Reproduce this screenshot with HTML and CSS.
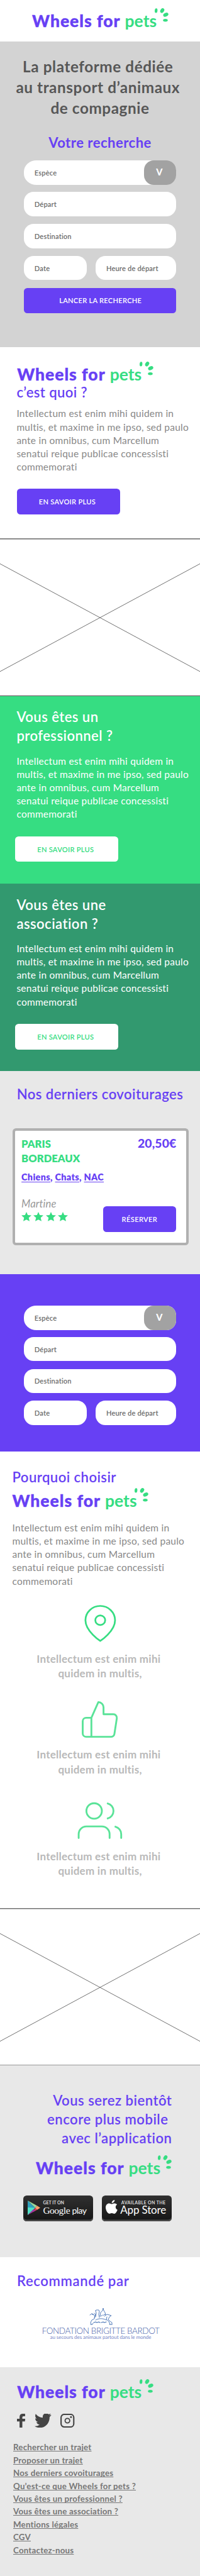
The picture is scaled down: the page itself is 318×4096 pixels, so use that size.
FILE: index.html
```html
<!DOCTYPE html>
<html lang="fr">
<head>
<meta charset="utf-8">
<title>Wheels for pets</title>
<link rel="stylesheet" href="styles.css">
</head>
<body>
<svg class="defs" width="0" height="0">
  <symbol id="paw" viewBox="0 0 24 24">
    <ellipse cx="3.2" cy="3.9" rx="2.2" ry="3.7" transform="rotate(5 3.2 3.9)"/>
    <ellipse cx="13" cy="3.8" rx="2.9" ry="4" transform="rotate(32 13 3.8)"/>
    <ellipse cx="18.6" cy="10.4" rx="4.3" ry="2.9" transform="rotate(-25 18.6 10.4)"/>
    <ellipse cx="18" cy="19.3" rx="3.7" ry="2.2"/>
  </symbol>
  <symbol id="star" viewBox="0 0 16 15">
    <path d="M8 0l2.2 4.9 5.8.6-4.3 3.8 1.3 5.4L8 12.300l-5 2.400 1.300-5.400L0 5.500l5.800-.6z"/>
  </symbol>
</svg>

<header class="header">
  <div class="logo"><span class="logo-main">Wheels for</span><span class="logo-pets">pets</span><svg class="logo-paw"><use href="#paw"/></svg></div>
</header>

<section class="hero">
  <h1>La plateforme dédiée&nbsp;<br>au transport d’animaux&nbsp;<br>de compagnie</h1>
  <h2 class="hero-sub">Votre recherche</h2>
  <div class="form">
    <div class="field select"><span>Espèce</span><b class="chevron">V</b></div>
    <div class="field">Départ</div>
    <div class="field">Destination</div>
    <div class="row"><div class="field date">Date</div><div class="field hour">Heure de départ</div></div>
    <a class="btn search">LANCER LA RECHERCHE</a>
  </div>
</section>

<section class="about">
  <div class="logo">
    <span class="logo-main">Wheels for</span><span class="logo-pets">pets</span><svg class="logo-paw"><use href="#paw"/></svg>
  </div>
  <h2 class="about-title">c’est quoi ?</h2>
  <p class="text">Intellectum est enim mihi quidem in<br>multis, et maxime in me ipso, sed paulo<br>ante in omnibus, cum Marcellum<br>senatui reique publicae concessisti<br>commemorati</p>
  <a class="btn more">EN SAVOIR PLUS</a>
</section>

<svg class="placeholder" viewBox="0 0 318 251.300" preserveAspectRatio="none">
  <rect width="318" height="1.600"/><rect y="249.700" width="318" height="1.600"/>
  <path d="M0 40.400L318 211.800M318 40.400L0 211.800"/>
</svg>

<section class="promo pro">
  <h2>Vous êtes un<br>professionnel ?</h2>
  <p class="text">Intellectum est enim mihi quidem in<br>multis, et maxime in me ipso, sed paulo<br>ante in omnibus, cum Marcellum<br>senatui reique publicae concessisti<br>commemorati</p>
  <a class="btn more light">EN SAVOIR PLUS</a>
</section>
<section class="promo asso">
  <h2>Vous êtes une<br>association ?</h2>
  <p class="text">Intellectum est enim mihi quidem in<br>multis, et maxime in me ipso, sed paulo<br>ante in omnibus, cum Marcellum<br>senatui reique publicae concessisti<br>commemorati</p>
  <a class="btn more light">EN SAVOIR PLUS</a>
</section>

<section class="rides">
  <h2>Nos derniers covoiturages</h2>
  <article class="card">
    <div class="card-top">
      <div class="cities">PARIS<br>BORDEAUX</div>
      <div class="price">20,50€</div>
    </div>
    <div class="tags"><u>Chiens</u>, <u>Chats</u>, <u>NAC</u></div>
    <div class="card-bottom">
      <div>
        <div class="driver">Martine</div>
        <div class="stars">
          <svg><use href="#star"/></svg><svg><use href="#star"/></svg><svg><use href="#star"/></svg><svg><use href="#star"/></svg>
        </div>
      </div>
      <a class="btn book">RÉSERVER</a>
    </div>
  </article>
</section>

<section class="search-band">
  <div class="form">
    <div class="field select"><span>Espèce</span><b class="chevron">V</b></div>
    <div class="field">Départ</div>
    <div class="field">Destination</div>
    <div class="row"><div class="field date">Date</div><div class="field hour">Heure de départ</div></div>
  </div>
</section>

<section class="why">
  <h2>Pourquoi choisir</h2>
  <div class="logo"><span class="logo-main">Wheels for</span><span class="logo-pets">pets</span><svg class="logo-paw"><use href="#paw"/></svg></div>
  <p class="text">Intellectum est enim mihi quidem in<br>multis, et maxime in me ipso, sed paulo<br>ante in omnibus, cum Marcellum<br>senatui reique publicae concessisti<br>commemorati</p>
  <svg class="icon pin" viewBox="0 0 24 24" preserveAspectRatio="none"><path d="M21 10c0 7-9 13-9 13s-9-6-9-13a9 9 0 0 1 18 0z"/><circle cx="12" cy="10" r="3"/></svg>
  <p class="reason">Intellectum est enim mihi&nbsp;<br>quidem in multis,</p>
  <svg class="icon thumb" viewBox="0 0 24 24"><path d="M14 9V5a3 3 0 0 0-3-3l-4 9v11h11.280a2 2 0 0 0 2-1.700l1.380-9a2 2 0 0 0-2-2.300zM7 22H4a2 2 0 0 1-2-2v-7a2 2 0 0 1 2-2h3"/></svg>
  <p class="reason">Intellectum est enim mihi&nbsp;<br>quidem in multis,</p>
  <svg class="icon users" viewBox="0 0 24 24"><path d="M17 21v-2a4 4 0 0 0-4-4H5a4 4 0 0 0-4 4v2M23 21v-2a4 4 0 0 0-3-3.870M16 3.130a4 4 0 0 1 0 7.750"/><circle cx="9" cy="7" r="4"/></svg>
  <p class="reason">Intellectum est enim mihi&nbsp;<br>quidem in multis,</p>
</section>

<svg class="placeholder second" viewBox="0 0 318 250.200" preserveAspectRatio="none">
  <rect width="318" height="1.500"/><rect y="249.300" width="318" height=".9"/>
  <path d="M0 40.400L318 211.800M318 40.400L0 211.800"/>
</svg>

<section class="app">
  <h2>Vous serez bientôt<br>encore plus mobile&nbsp;<br>avec l’application</h2>
  <div class="logo"><span class="logo-main">Wheels for</span><span class="logo-pets">pets</span><svg class="logo-paw"><use href="#paw"/></svg></div>
  <div class="badges">
    <a class="badge">
      <svg class="play" viewBox="0 0 20 23"><path fill="#2f9fbd" d="M0 0l12 11.500L0 23z"/><path fill="#4fe0c4" d="M0 11l12 .5L0 23z"/><path fill="#9bd79a" d="M0 0l15 8.300-3 3.200z"/><path fill="#d8385f" d="M12 11.500l3 3.200L8 18.500z"/><path fill="#a1359d" d="M0 23l9.500-9.200 2.500 2.500z"/><path fill="#ffa069" d="M15 8.300l5 3.200-5 3.200-3-3.200z"/></svg>
      <span class="badge-text"><small>GET IT ON</small><span class="store"><span class="google">Google</span> <span class="play-word">play</span></span></span>
    </a>
    <a class="badge apple-badge">
      <svg class="apple" viewBox="0 0 19 23"><path fill="#fff" d="M14.300 0c.2 2.300-2 5-4.600 4.900C9.500 2.600 11.900.3 14.300 0zM9.600 6.600c1 0 2.500-1.200 4.600-1.100 1.600.1 3 .8 3.900 2.100-3.400 2.200-2.800 6.800.7 8.200-.7 2-2.700 6-5 6.100-1.500.1-2.200-.9-4-.9s-2.600.9-4 .9C3.400 21.900.1 16.500 0 12.300-.1 8 2.700 5.500 5.500 5.500c1.700 0 3.200 1.100 4.100 1.100z"/></svg>
      <span class="badge-text"><small>AVAILABLE ON THE</small><span class="store appstore">App Store</span></span>
    </a>
  </div>
</section>

<section class="partners">
  <h2>Recommandé par</h2>
  <div class="fbb">
    <svg class="emblem" viewBox="0 0 37 28"><g fill="none" stroke="#4672b4" stroke-width=".9" stroke-linejoin="round" stroke-linecap="round"><path d="M1 12l3-2 3 1 2 3-1 4-4 2-2 4 1 3M4 10l2 2M8 9l2 2-2 5M10 5l1-1h4l1 2-1 5 1 5M10 5l1 4-1 6M17 14l1-6 3-3 1-4 1 4 2 3 1 4-2-1-2 2M18 14l3-2M24 14l4-3 4 1 3 1-3 2-2 4 3 3 3 2v3M28 15l-1 4 4 3 2 5M10 20c5-3 12-3 17 0"/><path d="M2 27h3l1-2M32 27h4" /><path stroke-width="1.200" d="M7 24l3-1 2 1 3-1 2 1M19 24l3-1 2 1 3-1"/></g></svg>
    <div class="fbb-name">FONDATION BRIGITTE BARDOT</div>
    <div class="fbb-sub">au secours des animaux partout dans le monde</div>
  </div>
</section>

<footer class="footer">
  <div class="logo"><span class="logo-main">Wheels for</span><span class="logo-pets">pets</span><svg class="logo-paw"><use href="#paw"/></svg></div>
  <div class="social">
    <svg width="13.200" height="22" viewBox="0 0 13.200 22"><path fill="#444" d="M4.100 22V12.300H0V8.100h4.100V5.200C4.100 1.800 6 0 9.200 0h3.700v3.900h-2.300c-1.600 0-2.100.7-2.100 2v2.200h4.700l-.6 4.200H8.500V22z"/></svg>
    <svg width="26.600" height="22" viewBox="0 3 24 18.500" preserveAspectRatio="none"><path fill="#444" d="M23.950 4.570a10 10 0 0 1-2.820.77 4.960 4.960 0 0 0 2.160-2.720c-.95.55-2 .95-3.130 1.180a4.920 4.920 0 0 0-8.380 4.480C7.690 8.100 4.070 6.130 1.640 3.160a4.820 4.820 0 0 0-.67 2.480c0 1.710.87 3.210 2.190 4.100a4.900 4.900 0 0 1-2.230-.62v.06a4.920 4.920 0 0 0 3.950 4.830 5 5 0 0 1-2.210.08 4.940 4.940 0 0 0 4.600 3.420A9.870 9.870 0 0 1 0 19.540a14 14 0 0 0 7.550 2.210c9.050 0 14-7.500 14-13.980 0-.21 0-.42-.02-.63a9.940 9.940 0 0 0 2.460-2.550z"/></svg>
    <svg width="22.400" height="22" viewBox="0 0 22.400 22" fill="none" stroke="#444"><rect x="1.100" y="1" width="20.200" height="20" rx="5" stroke-width="2.100"/><circle cx="11.200" cy="11" r="3.700" stroke-width="1.800"/><circle cx="16.900" cy="5.300" r="1.500" fill="#444" stroke="none"/></svg>
  </div>
  <nav class="links">
    <a>Rechercher un trajet</a>
    <a>Proposer un trajet</a>
    <a>Nos derniers covoiturages</a>
    <a>Qu’est-ce que Wheels for pets ?</a>
    <a>Vous êtes un professionnel ?</a>
    <a>Vous êtes une association ?</a>
    <a>Mentions légales</a>
    <a>CGV</a>
    <a>Contactez-nous</a>
  </nav>
</footer>
</body>
</html>
```
FILE: styles.css
```css
* { box-sizing: border-box; }
body {
  margin: 0;
  width: 318px;
  background: #fff;
  font-family: Lato, "Open Sans", sans-serif;
}
h1, h2, p { margin: 0; white-space: nowrap; }
h2 {
  font-size: 22.1px;
  line-height: 30px;
  font-weight: 600;
  letter-spacing: .43px;
  color: #6740f4;
}
svg { display: block; flex: none; }
.defs { position: absolute; }

/* Logo */
.logo {
  display: flex;
  width: 217px;
  height: 40px;
  line-height: 40px;
  white-space: nowrap;
}
.logo-main {
  width: 140.500px;
  font-size: 26.500px;
  font-weight: 900;
  letter-spacing: .99px;
  color: #6740f4;
  -webkit-text-stroke: .4px #6740f4;
}
.logo-pets {
  width: 53px;
  padding-left: 7px;
  font-size: 26.500px;
  font-weight: 700;
  color: #36dd82;
}
.logo-paw { width: 24px; height: 24px; fill: #36dd82; }

.header { height: 66.400px; padding: 13.100px 0 0 51.100px; }

/* Hero and search form */
.hero {
  height: 485.200px;
  padding-top: 22.200px;
  background: #d3d3d3;
  text-align: center;
}
h1 {
  font-size: 24.300px;
  line-height: 33.200px;
  font-weight: 700;
  letter-spacing: .57px;
  color: #575757;
}
.hero-sub { margin-top: 23.500px; font-weight: 700; letter-spacing: .46px; }
.form {
  display: flex;
  flex-direction: column;
  gap: 12.200px;
  width: 241.700px;
  margin: 13.500px 0 0 38.100px;
  text-align: left;
}
.field {
  display: flex;
  align-items: center;
  height: 38.700px;
  padding-left: 16.700px;
  border-radius: 15.400px;
  background: #fff;
  font-size: 11.100px;
  font-weight: 600;
  letter-spacing: .18px;
  color: #6b6b6b;
}
.select {
  justify-content: space-between;
  margin-bottom: -1.100px;
  border-radius: 20px 15.400px 15.400px 20px / 18px 15.400px 15.400px 18px;
}
.chevron {
  width: 51.100px;
  height: 38.700px;
  padding-right: 1.500px;
  border-radius: 15.400px;
  background: #a2a2a2;
  color: #fff;
  font-size: 14.500px;
  line-height: 37.700px;
  text-align: center;
}
.row { display: flex; justify-content: space-between; }
.date { width: 99.800px; }
.hour { width: 127.600px; }
.btn {
  display: flex;
  align-items: center;
  justify-content: center;
  height: 40.900px;
  border-radius: 5.500px;
  background: #6740f4;
  color: #fff;
  font-size: 11.100px;
  font-weight: 600;
  letter-spacing: .27px;
}
.search { height: 40.600px; padding-left: 1.500px; }

/* About */
.about { height: 304.100px; padding: 23.600px 0 0 26.400px; }
.about .logo { margin-left: .8px; }
.about-title { margin-top: -5.700px; letter-spacing: .37px; }
.text {
  margin-top: 8px;
  font-size: 15.500px;
  line-height: 21.150px;
  letter-spacing: .23px;
  color: #888;
}
.more { width: 163.500px; margin: 23.700px 0 0 .8px; padding-right: 4px; }

.placeholder { width: 318px; height: 251.300px; fill: #707070; stroke: none; }
.placeholder path { stroke: #707070; stroke-width: 1; fill: none; }
.second { height: 250.200px; }

/* Coloured promo blocks */
.promo { height: 298.200px; padding: 18.500px 0 0 26.400px; }
.pro { background: #36dd82; }
.asso { height: 297.400px; background: #32996f; }
.promo h2 { line-height: 29.900px; color: #fff; }
.promo .text { margin-top: 14.500px; color: #fff; }
.light { margin: 24px 0 0 -2.100px; width: 164px; background: #fff; color: #36dd82; }

/* Rides */
.rides { height: 323.600px; padding-top: 22.200px; background: #e8e8e8; }
.rides h2 { text-align: center; }
.card {
  width: 280.300px;
  height: 186px;
  margin: 39.500px 0 0 19.500px;
  padding: 9.200px 15.500px 0 10.600px;
  border: 4px solid #b0b0b0;
  border-radius: 5.500px;
  background: #fff;
}
.card-top { display: flex; justify-content: space-between; align-items: baseline; }
.cities { font-size: 16.600px; line-height: 22.600px; font-weight: 800; color: #36dd82; }
.price { font-size: 19.400px; line-height: 22.600px; font-weight: 900; letter-spacing: .08px; color: #6740f4; }
.tags {
  margin-top: 8.400px;
  font-size: 14.400px;
  line-height: 20px;
  font-weight: 800;
  letter-spacing: .34px;
  color: #6740f4;
}
.tags u { text-decoration-thickness: 1px; text-underline-offset: 1.500px; text-decoration-skip-ink: none; }
.card-bottom { display: flex; justify-content: space-between; margin-top: 22.400px; }
.driver { font-size: 16.600px; line-height: 20px; font-style: italic; color: #999; letter-spacing: .1px; }
.stars { display: flex; gap: 3.400px; margin-top: 2.500px; fill: #36dd82; }
.stars svg { width: 16px; height: 15px; }
.book { width: 116.800px; height: 41px; margin-top: 14.100px; letter-spacing: .38px; }

.search-band { height: 282.100px; padding-top: 49.800px; background: #6740f4; }
.search-band .form { margin-top: 0; }

/* Why */
.why { height: 725.800px; padding: 26.200px 0 0 19.500px; }
.why .logo { margin-top: 1.700px; }
.why .text { margin-top: 13.200px; line-height: 21.060px; }
.icon { fill: none; stroke: #36dd82; stroke-width: 1.050; stroke-linecap: round; stroke-linejoin: round; }
.pin { width: 62.800px; height: 60.700px; margin: 25.900px 0 0 108.400px; }
.thumb { width: 66.200px; height: 66.200px; margin: 28px 0 0 106.600px; opacity: .82; }
.users { width: 73.800px; height: 73.800px; margin: 32.600px 0 0 102.600px; stroke-width: .93; opacity: .82; }
.reason {
  width: 279px;
  margin-top: 14.600px;
  font-size: 17px;
  line-height: 23.400px;
  font-weight: 700;
  letter-spacing: .26px;
  text-align: center;
  color: #b9b9b9;
}
.thumb + .reason { margin-top: 11.700px; }
.users + .reason { margin-top: 8.400px; }

/* App */
.app { height: 304.700px; padding: 41.200px 44.600px 0 37.100px; background: #e8e8e8; }
.app h2 { line-height: 29.800px; text-align: right; letter-spacing: .49px; }
.app .logo { margin: 12px 0 0 19.900px; }
.badges { display: flex; justify-content: space-between; margin-top: 24.200px; }
.badge {
  display: flex;
  width: 110.600px;
  height: 40.900px;
  padding: 7.100px 0 0 7.300px;
  border-radius: 5.500px;
  background: linear-gradient(#303030, #161616);
  box-shadow: inset 0 -2.600px 0 #4a4a4a;
  color: #fff;
  white-space: nowrap;
}
.apple-badge { width: 111.200px; padding-left: 6px; }
.play { width: 20px; height: 23px; margin-top: .9px; }
.apple { width: 19px; height: 23px; }
.badge-text { display: block; margin-left: 4px; }
.badge small { display: block; font-size: 7px; line-height: 8px; font-weight: 700; color: #ddd; }
.apple-badge small { letter-spacing: .39px; margin-left: 1.600px; }
.store { display: block; font-size: 17px; line-height: 16px; margin-top: .2px; }
.google { font: 15.500px/16px "Liberation Serif", serif; letter-spacing: -.5px; }
.play-word { font-size: 14px; letter-spacing: -.5px; margin-left: -1px; }
.appstore { letter-spacing: -.15px; }

/* Partners */
.partners { height: 174.600px; padding: 23.100px 0 0 27px; }
.partners h2 { letter-spacing: .63px; }
.fbb { width: 266px; margin-top: 27px; text-align: center; white-space: nowrap; }
.emblem { width: 37px; height: 28px; margin: 0 auto; }
.fbb-name { margin-top: 1px; font-size: 13.500px; line-height: 16px; font-weight: 300; letter-spacing: -.4px; color: #3f5ca8; }
.fbb-sub { margin-top: -2.500px; font-size: 8px; line-height: 9px; letter-spacing: -.07px; color: #7586c6; }

/* Footer */
.footer { height: 332.400px; padding: 19.400px 0 0 21px; background: #e8e8e8; }
.footer .logo { margin-left: 6.200px; }
.social { display: flex; gap: 14.700px; margin: 15.200px 0 0 6.200px; }
.links { display: flex; flex-direction: column; align-items: flex-start; margin-top: 21.400px; }
.links a {
  font-size: 13.300px;
  line-height: 20.390px;
  font-weight: 700;
  letter-spacing: .22px;
  color: #777;
  text-decoration: underline 1px;
  text-underline-offset: 1.300px;
  text-decoration-skip-ink: none;
  white-space: nowrap;
}
```
